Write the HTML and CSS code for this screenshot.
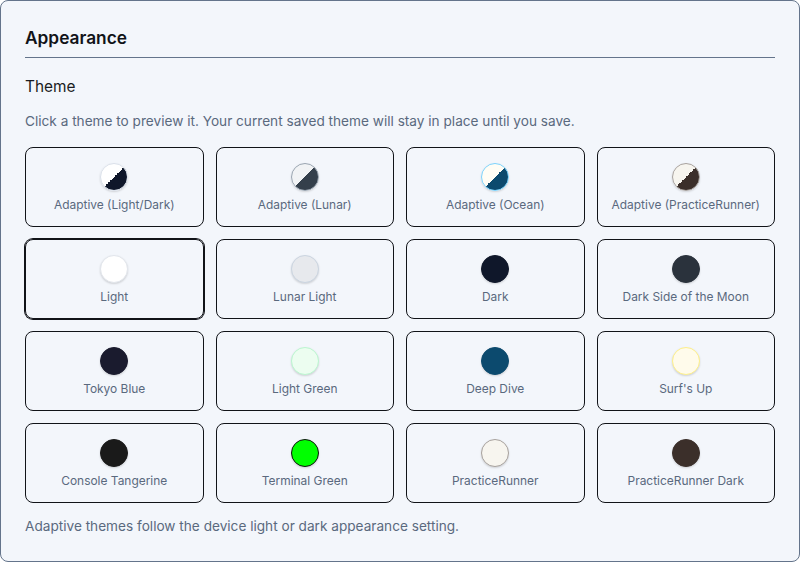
FILE: index.html
```html
<!DOCTYPE html>
<html lang="en">
<head>
<meta charset="utf-8">
<title>Appearance</title>
<link rel="stylesheet" href="styles.css">
</head>
<body>
<section class="panel">
  <h2 class="title">Appearance</h2>
  <h3 class="subtitle">Theme</h3>
  <p class="note">Click a theme to preview it. Your current saved theme will stay in place until you save.</p>
  <div class="grid">
    <button class="tile"><span class="dot a-light"></span><span class="label">Adaptive (Light/Dark)</span></button>
    <button class="tile"><span class="dot a-lunar"></span><span class="label">Adaptive (Lunar)</span></button>
    <button class="tile"><span class="dot a-ocean"></span><span class="label">Adaptive (Ocean)</span></button>
    <button class="tile"><span class="dot a-pr"></span><span class="label">Adaptive (PracticeRunner)</span></button>
    <button class="tile selected"><span class="dot light"></span><span class="label">Light</span></button>
    <button class="tile"><span class="dot lunar"></span><span class="label">Lunar Light</span></button>
    <button class="tile"><span class="dot dark"></span><span class="label">Dark</span></button>
    <button class="tile"><span class="dot moon"></span><span class="label">Dark Side of the Moon</span></button>
    <button class="tile"><span class="dot tokyo"></span><span class="label">Tokyo Blue</span></button>
    <button class="tile"><span class="dot green"></span><span class="label">Light Green</span></button>
    <button class="tile"><span class="dot deep"></span><span class="label">Deep Dive</span></button>
    <button class="tile"><span class="dot surf"></span><span class="label">Surf's Up</span></button>
    <button class="tile"><span class="dot console"></span><span class="label">Console Tangerine</span></button>
    <button class="tile"><span class="dot terminal"></span><span class="label">Terminal Green</span></button>
    <button class="tile"><span class="dot pr"></span><span class="label">PracticeRunner</span></button>
    <button class="tile"><span class="dot pr-dark"></span><span class="label">PracticeRunner Dark</span></button>
  </div>
  <p class="note foot">Adaptive themes follow the device light or dark appearance setting.</p>
</section>
</body>
</html>
```
FILE: styles.css
```css
* { box-sizing: border-box; }
html, body { margin: 0; padding: 0; height: 100%; }
body { font-family: Inter, "Liberation Sans", sans-serif; background: #fff; }
.panel {
  width: 800px;
  height: 562px;
  padding: 24px;
  background: #f3f6fb;
  border: 1px solid #64748b;
  border-radius: 8px;
  overflow: hidden;
}
.title {
  margin: 0 0 17px;
  padding: 1px 0 7px;
  font-size: 17.3px;
  line-height: 24px;
  font-weight: 600;
  color: #111318;
  border-bottom: 1px solid #64748b;
}
.subtitle {
  margin: 0 0 12px;
  font-size: 15.4px;
  line-height: 24px;
  font-weight: 400;
  color: #1a1c22;
}
.note {
  margin: 0 0 16px;
  font-size: 13.63px;
  line-height: 20px;
  color: #5a697e;
}
.foot { margin: 13px 0 0; }
.grid {
  display: grid;
  grid-template-columns: repeat(4, 1fr);
  grid-auto-rows: 80px;
  gap: 12px;
}
.tile {
  display: flex;
  flex-direction: column;
  align-items: center;
  justify-content: flex-start;
  gap: 6px;
  padding: 15px 8px 0;
  background: transparent;
  border: 1px solid #111318;
  border-radius: 8px;
  font-family: inherit;
}
.tile.selected { box-shadow: 0 0 0 1px #111318; }
.label {
  font-size: 11.95px;
  line-height: 16px;
  color: #5a697e;
}
.dot {
  display: block;
  width: 28px;
  height: 28px;
  border-radius: 50%;
  border: 1px solid #d1d5db;
  background-origin: border-box;
  box-shadow: 0 1px 2px rgba(0, 0, 0, 0.15);
}
.a-light { background-image: linear-gradient(135deg, #fff 50%, #0f172a 50%); border-color: #dbe1ea; }
.a-lunar { background-image: linear-gradient(135deg, #f1f3f5 50%, #343f4b 50%); border-color: #9aa5b1; }
.a-ocean { background-image: linear-gradient(135deg, #fffdf5 50%, #0c4a6e 50%); border-color: #7dd3fc; }
.a-pr { background-image: linear-gradient(135deg, #f7f5ef 50%, #3b2f2a 50%); border-color: #a8a29e; }
.light { background-color: #fff; border-color: #e2e6ec; }
.lunar { background-color: #e7e9ed; border-color: #cbd5e1; }
.dark { background-color: #0f172a; border-color: #0f172a; }
.moon { background-color: #2a323c; border-color: #2a323c; }
.tokyo { background-color: #1a1b2e; border-color: #1a1b2e; }
.green { background-color: #ecfdf0; border-color: #bbf7d0; }
.deep { background-color: #0c4a6e; border-color: #0c4a6e; }
.surf { background-color: #fffbeb; border-color: #fef08a; }
.console { background-color: #1a1a1a; border-color: #1a1a1a; }
.terminal { background-color: #00ff00; border-color: #111; }
.pr { background-color: #f7f5ef; border-color: #a8a29e; }
.pr-dark { background-color: #3b2f2a; border-color: #3b2f2a; }
```
